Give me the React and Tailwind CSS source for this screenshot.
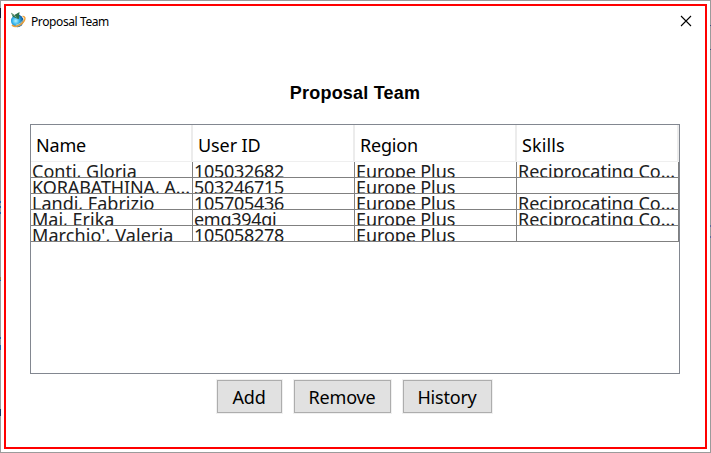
const columns = [
  { label: 'Name', tracking: 'tracking-[-0.2px]' },
  { label: 'User ID', tracking: 'tracking-[-0.1px]' },
  { label: 'Region', tracking: 'tracking-[-0.2px]' },
  { label: 'Skills', tracking: 'tracking-[0.1px]' },
];

const members = [
  { cells: ['Conti, Gloria', '105032682', 'Europe Plus', 'Reciprocating Co...'], tracking: 'tracking-[0px]' },
  { cells: ['KORABATHINA, A...', '503246715', 'Europe Plus', ''], tracking: 'tracking-[-0.1px]' },
  { cells: ['Landi, Fabrizio', '105705436', 'Europe Plus', 'Reciprocating Co...'], tracking: 'tracking-[0px]' },
  { cells: ['Mai, Erika', 'emg394gi', 'Europe Plus', 'Reciprocating Co...'], tracking: 'tracking-[0px]' },
  { cells: ["Marchio', Valeria", '105058278', 'Europe Plus', ''], tracking: 'tracking-[0.1px]' },
];

const cellTracking = ['', 'tracking-[-0.3px]', 'tracking-[-0.1px]', 'tracking-[0px]'];

const buttons = [
  { label: 'Add', width: 'w-[65px]' },
  { label: 'Remove', width: 'w-[97px]' },
  { label: 'History', width: 'w-[89px]' },
];

// Coloured slivers of the desktop showing along the window's edges
const leftMarks = [
  [8, 10, '#16122f'], [38, 10, '#c09a4c'], [201, 2, '#1d61ab'], [206, 2, '#1d61ab'], [212, 2, '#1d61ab'],
  [277, 3, '#9c7a3d'], [280, 1, '#1d61ab'], [337, 2, '#1d61ab'], [345, 5, '#1d61ab'], [409, 7, '#17355f'],
];
const rightMarks = [[25, 1, '#3d4f80'], [49, 1, '#3d4f80'], [225, 2, '#5d6a9b'], [236, 2, '#5d6a9b']];

function Marks({ items, side }) {
  return (
    <svg className={`absolute top-0 h-[453px] w-px ${side}`} viewBox="0 0 1 453" shapeRendering="crispEdges">
      {items.map(([y, h, c]) => <rect key={y} y={y} width="1" height={h} fill={c} />)}
    </svg>
  );
}

function GlobeIcon() {
  return (
    <svg className="mb-px" width="16" height="17" viewBox="0 0 16 17">
      <defs>
        <radialGradient id="globe" cx=".38" cy=".5" r=".62">
          <stop offset="0" stopColor="#b5f4ff" />
          <stop offset=".45" stopColor="#35b5ee" />
          <stop offset="1" stopColor="#064a90" />
        </radialGradient>
      </defs>
      <circle cx="7.3" cy="8.9" r="6.3" fill="url(#globe)" />
      <path d="M12.6 4.2c2.6.3 2.8 2.3 1.7 4.500-1.700 3.300-6 5.800-9.300 5.700-1.300 0-2.300-.5-3-1.300" stroke="#eda03a" strokeWidth="1.5" fill="none" />
      <path d="M12.6 5.2c1.300.3 1.500 1.300.8 2.700-1.400 2.700-4.800 4.700-7.600 5.200" stroke="#f9dc9e" strokeWidth=".7" fill="none" />
      <path d="M1 .8 4.500 3 9.500 0 8.800 7.200 2.800 4.800Z" fill="#2c704b" />
      <path d="M1.200 1.200 6.500 5.200" stroke="#85ad91" strokeWidth="1" />
    </svg>
  );
}

export default function App() {
  return (
    <div className="relative h-[453px] w-[711px] border border-[#9b9b9b] bg-white p-[3px] font-['Noto_Sans','Open_Sans',sans-serif] text-black">
      <div className="flex h-full flex-col border-2 border-[#ff0000]">
        <header className="flex h-[30px] shrink-0 items-center pr-[13px] pl-1">
          <GlobeIcon />
          <span className="mt-[2px] ml-[5px] text-[12px] leading-[16px] tracking-[-0.4px]">Proposal Team</span>
          <button className="ml-auto" aria-label="Close">
            <svg width="12" height="12" viewBox="0 0 12 12" fill="none" stroke="#000" strokeWidth="1.1">
              <path d="m1 1 10 10M11 1 1 11" />
            </svg>
          </button>
        </header>
        <h1 className="mt-[46px] h-[22px] shrink-0 pr-px text-center font-['Liberation_Sans',sans-serif] text-[18px] leading-[22px] font-bold tracking-[0.2px]">Proposal Team</h1>
        <main className="mt-[20px] ml-6 h-[250px] w-[650px] shrink-0 border border-[#828790]">
          <div className="grid h-[37px] grid-cols-[162px_162px_162px_162px] border-b border-[#efefef]">
            {columns.map(({ label, tracking }) => (
              <div key={label} className={`border-r-2 border-[#ececec] pt-[8px] pl-[5px] text-[18px] leading-[25px] ${tracking}`}>{label}</div>
            ))}
          </div>
          {members.map(({ cells, tracking }) => (
            <div key={cells[0]} className="grid h-[16px] grid-cols-[162px_162px_162px_162px] text-[#202020]">
              {cells.map((value, i) => (
                <div key={columns[i].label} className={`overflow-hidden border-r border-b border-[#808080] pl-px text-[18px] leading-[18px] whitespace-pre ${i === 0 ? tracking : cellTracking[i]}`}>{value}</div>
              ))}
            </div>
          ))}
        </main>
        <footer className="mt-[5px] ml-[210px] flex gap-[10px]">
          {buttons.map(({ label, width }) => (
            <div key={label} className="border border-[#f0f0f0]">
              <button className={`${width} h-[33px] border border-[#adadad] bg-[#e1e1e1] pr-px text-[18px] leading-[30px] tracking-[-0.2px]`}>{label}</button>
            </div>
          ))}
        </footer>
      </div>
      <Marks items={leftMarks} side="-left-px -mt-px" />
      <Marks items={rightMarks} side="-right-px -mt-px" />
    </div>
  );
}
